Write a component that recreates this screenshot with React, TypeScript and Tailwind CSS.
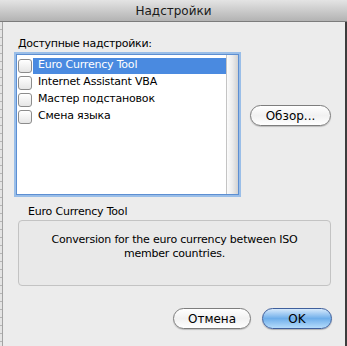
import React, { useState } from 'react';

const addins = ['Euro Currency Tool', 'Internet Assistant VBA', 'Мастер подстановок', 'Смена языка'];

const Checkbox: React.FC<{ checked: boolean }> = ({ checked }) => (
  <div className="w-[14px] h-[14px] shrink-0 rounded-[3px] border border-[#8c8c8c] bg-gradient-to-b from-white to-[#e6e6e6] shadow-[inset_0_1px_0_#fff]">
    {checked && <span className="block text-[10px] leading-[12px] text-center">✓</span>}
  </div>
);

const PillButton: React.FC<{ label: string; className?: string; primary?: boolean }> = ({ label, className, primary }) => (
  <button
    className={
      primary
        ? `h-[21px] rounded-full border border-[#3f5f9c] bg-gradient-to-b from-[#d6e9fb] via-[#6eaeea] to-[#b5dcfb] text-[12px] leading-none text-black shadow-[0_1px_1px_rgba(0,0,0,0.25)] ${className}`
        : `h-[21px] rounded-full border border-[#7d7d7d] bg-gradient-to-b from-white via-[#f1f1f1] to-white text-[12px] leading-none text-black shadow-[0_1px_1px_rgba(0,0,0,0.2)] ${className}`
    }
  >
    {label}
  </button>
);

export default function App() {
  const [selected, setSelected] = useState(0);

  return (
    <div className="w-[347px] h-[346px] flex flex-col bg-[#ececec] overflow-hidden text-black font-['DejaVu_Sans','Liberation_Sans',sans-serif]">
      {/* title bar */}
      <div className="h-[22px] shrink-0 flex items-center justify-center bg-gradient-to-b from-[#e4e4e4] to-[#b3b3b3] border-b border-[#7c7c7c] text-[12px] text-[#1a1a1a]">
        Надстройки
      </div>

      <div className="flex flex-1">
        <div className="w-[3px] border-r border-[#a3a3a3] bg-[repeating-linear-gradient(to_bottom,#e4e4e4_0,#e4e4e4_7px,#b5b5b5_7px,#b5b5b5_8px)]" />

        <div className="flex-1 flex flex-col">
          <div className="ml-[15px] mt-[15px] text-[11px] leading-[14px] tracking-[-0.3px]">Доступные надстройки:</div>

          <div className="flex mt-[3px]">
            <div className="ml-[13px] w-[223px] h-[141px] flex border border-[#5d8fd2] bg-white shadow-[0_0_0_2px_rgba(140,182,232,0.85)]">
              <div className="flex-1 pt-[2px]">
                {addins.map((name, i) => (
                  <div key={name} className="h-[17px] flex items-center" onClick={() => setSelected(i)}>
                    <div className="pl-[1px] pr-[1px]">
                      <Checkbox checked={false} />
                    </div>
                    <div
                      className={
                        i === selected
                          ? 'flex-1 h-[16px] pl-[5px] flex items-center text-[11px] tracking-[-0.2px] bg-[#4a8ae0] text-white'
                          : 'flex-1 h-[16px] pl-[5px] flex items-center text-[11px] tracking-[-0.2px]'
                      }
                    >
                      {name}
                    </div>
                  </div>
                ))}
              </div>
              <div className="w-[12px] border-l border-[#c4c4c4] bg-gradient-to-r from-[#fbfbfb] via-[#ececec] to-[#d2d2d2]" />
            </div>

            <PillButton label="Обзор..." className="ml-[11px] mt-[51px] w-[81px]" />
          </div>

          <div className="ml-[25px] mt-[10px] text-[11px] leading-[14px] tracking-[-0.2px]">{addins[selected]}</div>

          <div className="ml-[15px] mt-[1px] w-[313px] h-[66px] rounded-[4px] border border-[#c3c3c3] bg-[#e9e9e9] pt-[12px] text-center text-[11px] leading-[14px] tracking-[-0.2px]">
            Conversion for the euro currency between ISO
            <br />
            member countries.
          </div>

          <div className="flex justify-end gap-[11px] mt-[22px] mr-[13px]">
            <PillButton label="Отмена" className="w-[78px]" />
            <PillButton label="OK" className="w-[70px]" primary />
          </div>
        </div>

        <div className="w-[2px] bg-[#3d3d3d]" />
      </div>
    </div>
  );
}
